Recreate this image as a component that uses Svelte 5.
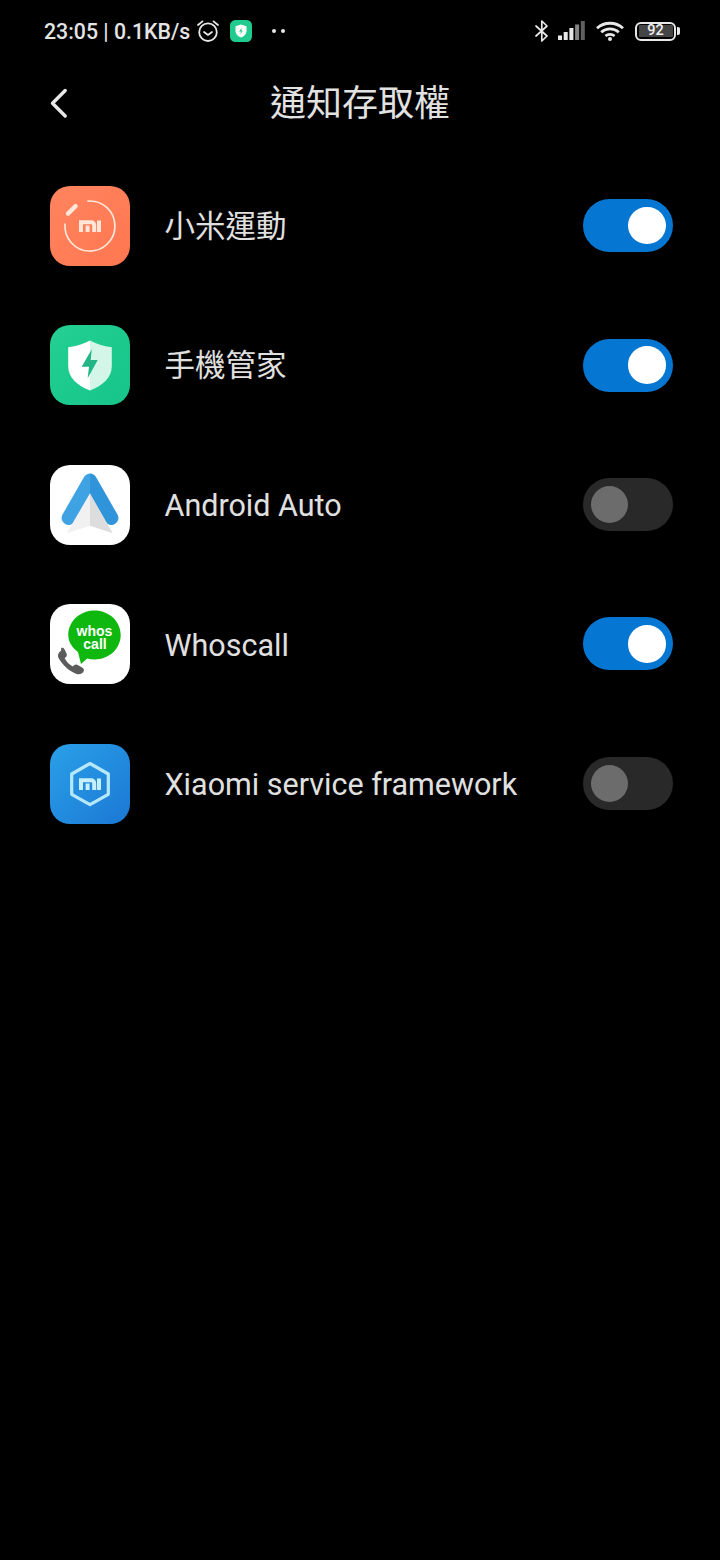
<script>
  const rows = [
    { id: 'fit', name: '小米運動', on: true, cjk: true },
    { id: 'sec', name: '手機管家', on: true, cjk: true },
    { id: 'auto', name: 'Android Auto', on: false, cjk: false },
    { id: 'whos', name: 'Whoscall', on: true, cjk: false },
    { id: 'xms', name: 'Xiaomi service framework', on: false, cjk: false }
  ];
  const miPath = 'M31 46V36.200h10.200a3 3 0 0 1 3 3V46M37.600 39.500V46M49 34.500V46';
</script>

<div class="screen">
  <div class="status">
    <div class="left">
      <span class="clock">23:05 | 0.1KB/s</span>
      <svg class="alarm" width="24" height="24" viewBox="0 0 24 24" fill="none" stroke="#e8e8e8">
        <circle cx="12" cy="13.200" r="8.800" stroke-width="1.800" />
        <path d="M8 13l4 3 4-3" stroke-width="1.700" stroke-linecap="round" stroke-linejoin="round" />
        <path d="M2 6l4.500-3.600M22 6l-4.500-3.600" stroke-width="1.800" stroke-linecap="round" />
      </svg>
      <svg class="guard" width="22" height="22" viewBox="0 0 22 22">
        <rect width="22" height="22" rx="5.500" fill="#1fcb8e" />
        <path d="M11 4.500l5.500 1.800v5c0 3-2.400 5-5.500 6.200-3.100-1.200-5.500-3.200-5.500-6.200v-5z" fill="#fff" />
        <path d="M11.600 7.600l-2.400 4h1.700l-.5 2.800 2.400-4h-1.600z" fill="#1fcb8e" />
      </svg>
      <span class="dots"><i></i><i></i></span>
    </div>
    <div class="right">
      <svg width="14" height="22" viewBox="0 0 14 22" fill="none" stroke="#e8e8e8" stroke-width="1.700" stroke-linejoin="round" stroke-linecap="round">
        <path d="M1 6l11 10-5.200 5V1L12 6 1 16" />
      </svg>
      <svg class="signal" width="28" height="20" viewBox="0 0 28 20">
        <rect x="0" y="14.500" width="4" height="4.500" fill="#e8e8e8" />
        <rect x="5.700" y="11" width="4" height="8" fill="#e8e8e8" />
        <rect x="11.400" y="7" width="4" height="12" fill="#e8e8e8" />
        <rect x="17.100" y="3.500" width="4" height="15.500" fill="#858585" />
        <rect x="22.800" y="0" width="4" height="19" fill="#606060" />
      </svg>
      <svg class="wifi" width="28" height="20" viewBox="0 0 28 20" fill="none" stroke="#e8e8e8" stroke-width="2.800">
        <path d="M1 7.200c7.400-6.600 18.600-6.600 26 0" />
        <path d="M5.200 11.200c5.100-4.400 12.500-4.400 17.600 0" />
        <path d="M9.400 15c2.700-2.100 6.500-2.100 9.200 0" />
        <circle cx="14" cy="18" r="2" fill="#e8e8e8" stroke="none" />
      </svg>
      <div class="battery">
        <div class="cell"><span>92</span></div>
        <div class="tip"></div>
      </div>
    </div>
  </div>

  <header class="bar">
    <svg class="back" width="24" height="36" viewBox="0 0 24 36" fill="none" stroke="#e8e8e8" stroke-width="3.400" stroke-linecap="round" stroke-linejoin="round">
      <path d="M18.200 5.500L5.500 18.300 18.200 31" />
    </svg>
    <h1>通知存取權</h1>
  </header>

  <ul class="list">
    {#each rows as row}
      <li class="row">
        <svg class="icon" width="80" height="80" viewBox="0 0 80 80">
          {#if row.id === 'fit'}
            <defs>
              <linearGradient id="grad-orange" x1="0" y1="0" x2="1" y2="1">
                <stop offset="0" stop-color="#ff845f" />
                <stop offset="1" stop-color="#ff7750" />
              </linearGradient>
            </defs>
            <rect width="80" height="80" rx="20" fill="url(#grad-orange)" />
            <path d="M38 15.100A25 25 0 1 1 15 38" fill="none" stroke="#ffe6d8" stroke-width="1.700" stroke-linecap="round" />
            <path d="M18 27.600L25.600 20.200" fill="none" stroke="#ffe6d8" stroke-width="4.400" stroke-linecap="round" />
            <path d={miPath} fill="none" stroke="#ffe6d8" stroke-width="4" />
          {:else if row.id === 'sec'}
            <defs>
              <linearGradient id="grad-green" x1="0" y1="0" x2="1" y2="1">
                <stop offset="0" stop-color="#24d092" />
                <stop offset="1" stop-color="#16c48a" />
              </linearGradient>
            </defs>
            <rect width="80" height="80" rx="20" fill="url(#grad-green)" />
            <path d="M40 15.500c6 3.200 13.500 5.600 21.800 6.800v18.700c0 11.500-8.800 19.500-21.800 24.500z" fill="#d3f6e9" />
            <path d="M40 15.500c-6 3.200-13.500 5.600-21.800 6.800v18.700c0 11.500 8.800 19.500 21.800 24.500z" fill="#fff" />
            <path d="M41.700 24.300L31.700 41.700H39L37.700 53.300 47.700 35H40.700z" fill="#22b586" />
          {:else if row.id === 'auto'}
            <defs>
              <linearGradient id="grad-sky" gradientUnits="userSpaceOnUse" x1="0" y1="0" x2="80" y2="0">
                <stop offset="0.5" stop-color="#3fa3e3" />
                <stop offset="0.5" stop-color="#2f94da" />
              </linearGradient>
            </defs>
            <rect width="80" height="80" rx="20" fill="#fff" />
            <path d="M18.500 53L40 15.500 61.500 53" fill="none" stroke="url(#grad-sky)" stroke-width="13.800" stroke-linecap="round" stroke-linejoin="round" />
            <path d="M40 28.300V60.700L16.700 68.300z" fill="#f1f1f1" />
            <path d="M40 28.300V60.700L62.700 68.300z" fill="#dddddd" />
          {:else if row.id === 'whos'}
            <rect width="80" height="80" rx="20" fill="#fff" />
            <path d="M44.500 6.500c14.500 0 26.200 10.800 26.200 24.500S59 55.500 44.500 55.500c-2.600 0-5-.3-7.300-1L31 60l-3-12C22 43.500 18.300 37.800 18.300 31 18.300 17.300 30 6.500 44.500 6.500z" fill="#0fb80f" />
            <text class="wc" x="44.500" y="31.500">whos</text>
            <text class="wc" x="45" y="45">call</text>
            <path transform="translate(-10.200 -18.600) scale(1.350 1.300)" d="M15.800 50.200c-2.300 1.300-2.900 3.800-1.700 6.100 3 5.300 7.300 9.400 12.800 11.700 2.300 1 4.600.1 5.500-1.700.6-1.200.3-2.200-.8-2.900l-3.500-2.200c-.9-.6-1.900-.5-2.700.2l-1 .9c-2.700-1.500-4.600-3.600-6-6.300l1-1c.7-.8.9-1.700.4-2.700l-1.500-3.200c-.6-1.200-1.500-1.500-2.500-.9z" fill="#5c5c5c" />
          {:else}
            <defs>
              <linearGradient id="grad-blue" x1="0" y1="0" x2="1" y2="1">
                <stop offset="0" stop-color="#2aa0e8" />
                <stop offset="1" stop-color="#1b78d4" />
              </linearGradient>
            </defs>
            <rect width="80" height="80" rx="20" fill="url(#grad-blue)" />
            <path d="M40 19.500L58.300 30V50.300L40 60.700 21.700 50.300V30z" fill="none" stroke="#b6e8fb" stroke-width="3.200" stroke-linejoin="round" />
            <path d={miPath} fill="none" stroke="#c8effc" stroke-width="4" />
          {/if}
        </svg>
        <span class="name" class:cjk={row.cjk} class:latin={!row.cjk}>{row.name}</span>
        <span class="toggle" class:on={row.on}><span class="knob"></span></span>
      </li>
    {/each}
  </ul>
</div>

<style>
  :global(body) {
    margin: 0;
    background: #000;
  }
  .screen {
    width: 720px;
    height: 1560px;
    background: #000;
    color: #e4e4e4;
    font-family: Roboto, "Noto Sans CJK TC", sans-serif;
    overflow: hidden;
  }
  .status {
    height: 62px;
    display: flex;
    align-items: center;
    justify-content: space-between;
    padding: 0 40px 0 44px;
    box-sizing: border-box;
  }
  .left,
  .right {
    display: flex;
    align-items: center;
  }
  .clock {
    font-size: 21.300px;
    font-weight: 500;
    color: #e4e4e4;
    width: 152px;
    white-space: nowrap;
  }
  .alarm {
    margin-right: 10px;
  }
  .guard {
    margin-right: 20px;
  }
  .dots {
    display: flex;
    gap: 5px;
  }
  .dots i {
    width: 4px;
    height: 4px;
    border-radius: 50%;
    background: #e8e8e8;
  }
  .signal {
    margin-left: 9px;
  }
  .wifi {
    margin-left: 10px;
  }
  .battery {
    display: flex;
    align-items: center;
    margin-left: 11px;
    gap: 1px;
  }
  .cell {
    width: 41px;
    height: 19px;
    box-sizing: border-box;
    border: 2.500px solid #e8e8e8;
    border-radius: 6px;
    padding: 1.500px;
    display: flex;
  }
  .cell span {
    flex: 1;
    background: #454545;
    border-radius: 1px;
    color: #f0f0f0;
    font-size: 14.500px;
    font-weight: 500;
    line-height: 11px;
    text-align: center;
  }
  .tip {
    width: 3px;
    height: 8px;
    border-radius: 0 2px 2px 0;
    background: #e8e8e8;
  }
  .bar {
    position: relative;
    height: 82px;
    box-sizing: border-box;
    padding-top: 2px;
    display: flex;
    align-items: center;
    justify-content: center;
  }
  .back {
    position: absolute;
    left: 47px;
    top: 23px;
  }
  h1 {
    margin: 0;
    font-size: 36px;
    font-weight: 400;
    line-height: 80px;
    color: #e2e2e2;
  }
  .list {
    list-style: none;
    margin: 0;
    padding: 12px 47px 0 50px;
  }
  .row {
    height: 139.400px;
    display: flex;
    align-items: center;
  }
  .icon {
    flex: none;
    margin-top: 0.800px;
    margin-right: 34.500px;
  }
  .wc {
    font-family: "Liberation Sans", Arial, sans-serif;
    font-size: 14px;
    font-weight: 700;
    fill: #fff;
    text-anchor: middle;
  }
  .name {
    flex: 1;
    font-size: 30.500px;
    color: #e0e0e0;
    white-space: nowrap;
  }
  .name.cjk {
    margin-bottom: 4px;
  }
  .name.latin {
    margin-top: 3px;
  }
  .toggle {
    flex: none;
    width: 90px;
    height: 53px;
    box-sizing: border-box;
    padding: 0 7.500px;
    border-radius: 27px;
    background: #292929;
    display: flex;
    align-items: center;
    justify-content: flex-start;
  }
  .toggle.on {
    background: #0577d2;
    justify-content: flex-end;
  }
  .knob {
    width: 37.500px;
    height: 37.500px;
    border-radius: 50%;
    background: #6c6c6c;
  }
  .toggle.on .knob {
    background: #fff;
  }
</style>
